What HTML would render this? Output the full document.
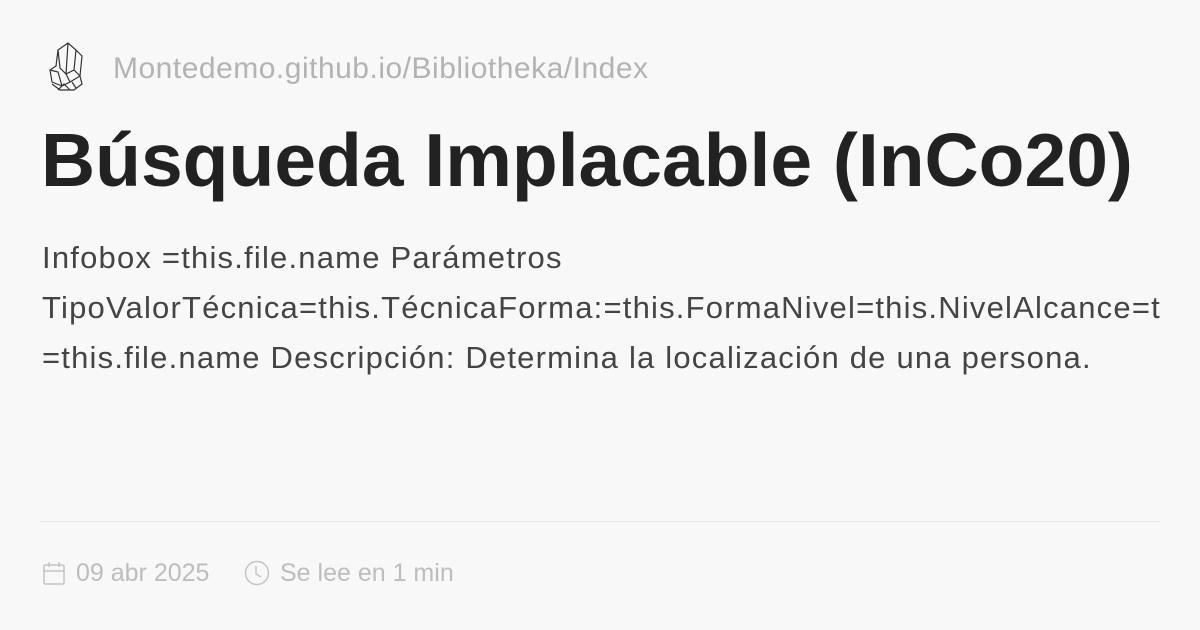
<!DOCTYPE html>
<html><head><meta charset="utf-8"><style>
html,body{margin:0;padding:0}
body{width:1200px;height:630px;background:#f8f8f8;font-family:"Liberation Sans",sans-serif;position:relative;overflow:hidden}
.url{position:absolute;left:113px;top:52px;font-size:30px;color:#b3b3b3;white-space:nowrap;letter-spacing:0.5px}
h1{position:absolute;left:41px;top:117px;margin:0;font-size:75px;font-weight:bold;color:#222;white-space:nowrap;letter-spacing:0}
.desc{position:absolute;left:42px;top:233px;width:1118px;font-size:31px;line-height:50px;color:#444;white-space:nowrap;overflow:hidden;letter-spacing:1.2px}
.hr{position:absolute;left:40px;top:521px;width:1120px;height:1px;background:#e6e6e6}
.foot{position:absolute;top:559px;font-size:25px;color:#bdbdbd;white-space:nowrap}
</style></head><body>
<svg style="position:absolute;left:46px;top:40px" width="42" height="54" viewBox="0 0 42 54" fill="none" stroke="#333" stroke-width="1.2">
<path d="M12 10 L22 3 L30 10 L28 30 L20 34 L14 28 Z M22 3 L20 34 M30 10 L36 16 L34 36 L28 30 M12 10 L10 26 L4 30 L6 42 L16 46 L24 42 L20 34 M4 30 L12 32 L16 46 M24 42 L34 36 L36 44 L28 50 L14 50 L6 44 M12 50 L18 44 L24 50 M30 48 L26 42"/>
</svg>
<div class="url">Montedemo.github.io/Bibliotheka/Index</div>
<h1>Búsqueda Implacable (InCo20)</h1>
<div class="desc">Infobox =this.file.name Parámetros<br>TipoValorTécnica=this.TécnicaForma:=this.FormaNivel=this.NivelAlcance=this.Alcance<br>=this.file.name Descripción: Determina la localización de una persona.</div>
<div class="hr"></div>
<svg style="position:absolute;left:43px;top:561px" width="22" height="24" viewBox="0 0 22 24" fill="none" stroke="#c4c4c4" stroke-width="1.5"><rect x="1" y="4" width="20" height="19" rx="1.5"/><path d="M1 10 H21 M6 1 V6 M16 1 V6"/></svg>
<div class="foot" style="left:76px">09 abr 2025</div>
<svg style="position:absolute;left:244px;top:560px" width="26" height="26" viewBox="0 0 26 26" fill="none" stroke="#c4c4c4" stroke-width="1.5"><circle cx="13" cy="13" r="11.5"/><path d="M12 6 V14 L17 17"/></svg>
<div class="foot" style="left:280px">Se lee en 1 min</div>
</body></html>
